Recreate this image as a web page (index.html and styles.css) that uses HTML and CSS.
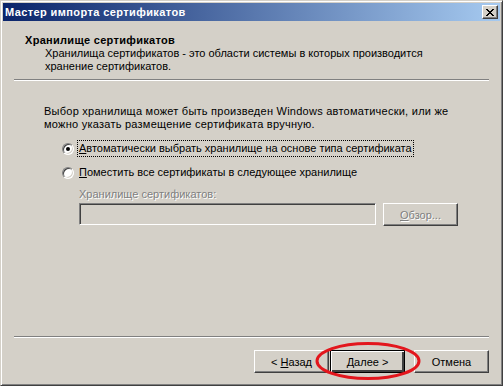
FILE: index.html
```html
<!doctype html>
<html lang="ru">
    <head>
        <meta charset="UTF-8" />
        <title>Мастер импорта сертификатов</title>
        <link rel="stylesheet" href="styles.css">
    </head>
    <body>
        <div class="window">
            <div class="titlebar">
                <span class="title">Мастер импорта сертификатов</span>
                <button class="close-btn" aria-label="Закрыть">
                    <svg width="8" height="7" viewBox="0 0 8 7" shape-rendering="crispEdges">
                        <path d="M0 0h2v1h1v1h2v-1h1v-1h2v1h-1v1h-1v1h-1v1h1v1h1v1h1v1h-2v-1h-1v-1h-2v1h-1v1h-2v-1h1v-1h1v-1h1v-1h-1v-1h-1v-1h-1z" fill="#000"/>
                    </svg>
                </button>
            </div>

            <div class="header">
                <div class="header-title">Хранилище сертификатов</div>
                <div class="header-desc">
                    Хранилища сертификатов - это области системы в которых производится<br>
                    хранение сертификатов.
                </div>
            </div>

            <div class="separator"></div>

            <div class="content">
                <p class="intro">
                    Выбор хранилища может быть произведен Windows автоматически, или же<br>
                    можно указать размещение сертификата вручную.
                </p>

                <div class="options">
                    <label class="radio-row">
                        <span class="radio checked"></span>
                        <span class="radio-label focused"><u>А</u>втоматически выбрать хранилище на основе типа сертификата</span>
                    </label>
                    <label class="radio-row">
                        <span class="radio"></span>
                        <span class="radio-label"><u>П</u>оместить все сертификаты в следующее хранилище</span>
                    </label>

                    <div class="store">
                        <div class="store-label disabled">Хранилище сертификатов:</div>
                        <div class="store-row">
                            <div class="field"></div>
                            <button class="btn disabled" disabled><u>О</u>бзор...</button>
                        </div>
                    </div>
                </div>
            </div>

            <div class="separator"></div>

            <div class="footer">
                <button class="btn">&lt; <u>Н</u>азад</button>
                <button class="btn default"><u>Д</u>алее &gt;</button>
                <button class="btn cancel">Отмена</button>
            </div>

            <!-- hand-drawn marker around the Next button -->
            <svg class="highlight" width="106" height="40" viewBox="0 0 106 40">
                <ellipse cx="53" cy="20" rx="51" ry="17.5" fill="none" stroke="#e3161d" stroke-width="3"/>
            </svg>
        </div>
    </body>
</html>
```

FILE: styles.css
```css
* {
    margin: 0;
    padding: 0;
    box-sizing: border-box;
}

body {
    font-family: "Liberation Sans", Arial, sans-serif;
    font-size: 11px;
    line-height: 13px;
    color: #000;
    background: #d4d0c8;
}

.window {
    position: relative;
    width: 503px;
    height: 386px;
    display: flex;
    flex-direction: column;
    padding: 2px;
    background: #d4d0c8;
    border: 1px solid;
    border-color: #d4d0c8 #404040 #404040 #d4d0c8;
    box-shadow: inset 1px 1px #fff, inset -1px -1px #808080;
}

.titlebar {
    height: 18px;
    flex-shrink: 0;
    display: flex;
    align-items: center;
    justify-content: space-between;
    padding: 0 2px 0 2px;
    background: linear-gradient(to right, #0a246a, #a6caf0);
}

.title {
    color: #fff;
    font-weight: bold;
    letter-spacing: 0.4px;
}

.close-btn {
    width: 16px;
    height: 14px;
    display: flex;
    align-items: center;
    justify-content: center;
    background: #d4d0c8;
    border: 1px solid;
    border-color: #fff #404040 #404040 #fff;
    box-shadow: inset -1px -1px #808080;
    padding-top: 1px;
}

.header {
    height: 58px;
    flex-shrink: 0;
    padding: 13px 0 0 22px;
}

.header-title {
    font-weight: bold;
    letter-spacing: 0.3px;
}

.header-desc {
    margin-left: 20px;
}

.separator {
    height: 2px;
    flex-shrink: 0;
    margin: 0 11px;
    border-top: 1px solid #808080;
    border-bottom: 1px solid #fff;
}

.content {
    flex: 1;
    padding: 24px 0 0 41px;
}

.intro {
    letter-spacing: 0.25px;
}

.options {
    margin-top: 9px;
    padding-left: 18px;
}

.radio-row {
    display: flex;
    align-items: center;
    height: 17px;
    margin-bottom: 7px;
}

.radio {
    position: relative;
    width: 12px;
    height: 12px;
    margin-right: 3px;
    border-radius: 50%;
    background: #fff;
    border: 1px solid;
    border-color: #808080 #fff #fff #808080;
    box-shadow: inset 1px 1px #404040, inset -1px -1px #d4d0c8;
}

.radio.checked::after {
    content: "";
    position: absolute;
    left: 3px;
    top: 3px;
    width: 4px;
    height: 4px;
    border-radius: 50%;
    background: #000;
}

.radio-label {
    padding: 1px;
    border: 1px dotted transparent;
}

.radio-label.focused {
    border-color: #000;
}

.store {
    margin-top: 4px;
    padding-left: 17px;
}

.disabled {
    color: #808080;
    text-shadow: 1px 1px 0 #fff;
}

.store-row {
    display: flex;
    gap: 7px;
    margin-top: 2px;
}

.field {
    width: 297px;
    height: 22px;
    background: #d4d0c8;
    border: 1px solid;
    border-color: #808080 #fff #fff #808080;
    box-shadow: inset 1px 1px #404040, inset -1px -1px #d4d0c8;
}

.btn {
    width: 75px;
    height: 23px;
    font-family: inherit;
    font-size: 11px;
    color: #000;
    background: #d4d0c8;
    border: 1px solid;
    border-color: #fff #404040 #404040 #fff;
    box-shadow: inset -1px -1px #808080;
}

.btn.default {
    border: 1px solid #000;
    box-shadow: inset 1px 1px #fff, inset -2px -2px #404040, inset -1px -1px #808080;
}

.btn.disabled {
    color: #808080;
    text-shadow: 1px 1px 0 #fff;
}

.footer {
    height: 45px;
    flex-shrink: 0;
    display: flex;
    justify-content: flex-end;
    align-items: flex-start;
    gap: 1px;
    padding: 12px 11px 0 0;
}

.footer .cancel {
    margin-left: 8px;
}

.highlight {
    position: absolute;
    left: 314px;
    top: 340px;
}
```
